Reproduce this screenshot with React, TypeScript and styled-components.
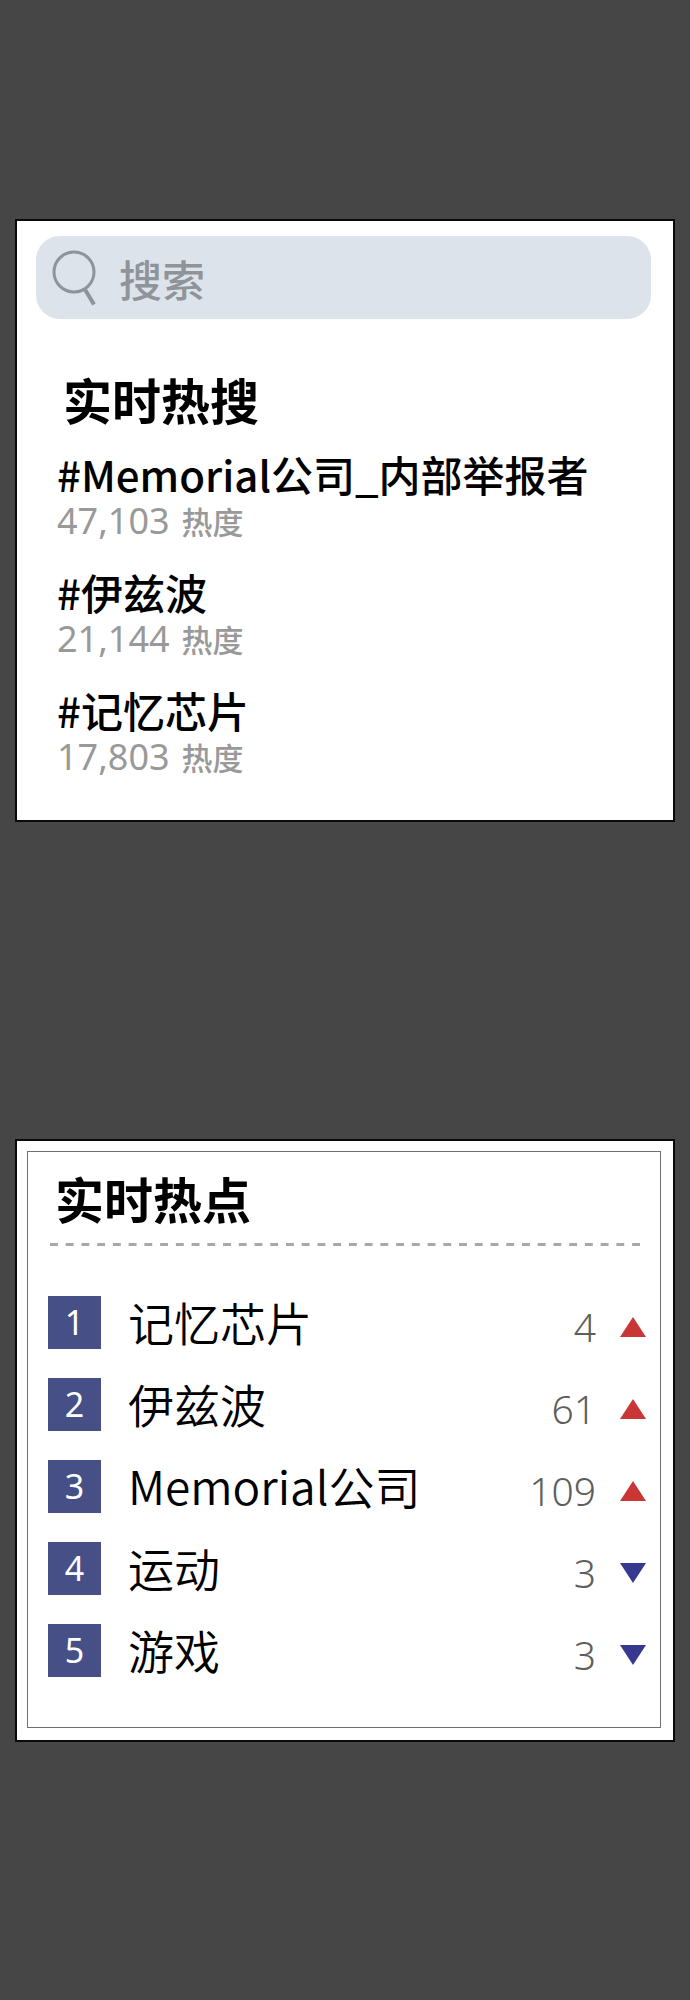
import React from "react";
import styled, { createGlobalStyle } from "styled-components";

const GlobalStyle = createGlobalStyle`
  * { box-sizing: border-box; }
  body {
    margin: 0;
    background: #464646;
    color: #000;
    font-family: "Noto Sans CJK SC", sans-serif;
  }
`;

const Page = styled.main`
  display: flex;
  flex-direction: column;
  gap: 317px;
  min-height: 100vh;
  padding: 219px 15px;
`;

const Card = styled.section`
  background: #fff;
  border: 2px solid #0a0a0a;
`;

const SearchCard = styled(Card)`
  padding: 15px 22px 40px 19px;
`;

const RankCard = styled(Card)`
  padding: 10px 12px 12px 10px;
`;

const SearchBar = styled.label`
  display: flex;
  align-items: center;
  gap: 21px;
  height: 83px;
  padding: 0 16px;
  border-radius: 24px;
  background: #dce3ea;
`;

const SearchIcon = styled.svg`
  flex: none;
  width: 46px;
  height: 58px;
  fill: none;
  stroke: #8e949b;
  stroke-width: 3;
`;

const SearchInput = styled.input`
  flex: 1;
  min-width: 0;
  padding: 0;
  border: 0;
  outline: 0;
  background: none;
  color: #8e9499;
  font: 500 43px/60px "Noto Sans CJK SC", sans-serif;

  &::placeholder {
    color: #8e9499;
    opacity: 1;
  }
`;

const Title = styled.h2`
  margin: 0;
  font-size: 49px;
  font-weight: 700;
  line-height: 56px;
`;

const SearchTitle = styled(Title)`
  margin: 52px 0 22px 27px;
`;

const TopicList = styled.ol`
  display: flex;
  flex-direction: column;
  gap: 23px;
  margin: 0;
  padding: 0 0 0 21px;
  list-style: none;
`;

const Topic = styled.a`
  display: block;
  color: #000;
  font-size: 42px;
  font-weight: 500;
  line-height: 49px;
  text-decoration: none;
`;

const Heat = styled.p`
  margin: 0;
  color: #999;
  font: 400 36px/46px "Noto Sans", "Noto Sans CJK SC", sans-serif;
`;

const HeatUnit = styled.span`
  margin-left: 12px;
  font: 500 31px/46px "Noto Sans CJK SC", sans-serif;
`;

const RankPanel = styled.div`
  padding: 18px 14px 50px 20px;
  border: 1px solid #707070;
`;

const RankTitle = styled(Title)`
  margin-left: 7px;
`;

const Divider = styled.svg`
  display: block;
  width: calc(100% - 8px);
  height: 3px;
  margin: 17px 0 50px 2px;
  stroke: #a8a8a8;
  stroke-width: 3;
`;

const RankList = styled.ol`
  display: flex;
  flex-direction: column;
  gap: 29px;
  margin: 0;
  padding: 0;
  list-style: none;
`;

const RankRow = styled.li`
  display: flex;
  align-items: center;
  height: 53px;
`;

const Badge = styled.span`
  flex: none;
  width: 53px;
  background: #474f87;
  color: #fff;
  font: 400 34px/53px "Noto Sans", sans-serif;
  text-align: center;
`;

const Name = styled.a`
  flex: 1;
  margin-left: 27px;
  padding-bottom: 2px;
  color: #000;
  font-size: 46px;
  font-weight: 350;
  line-height: 53px;
  text-decoration: none;
`;

const Change = styled.span`
  display: flex;
  align-items: center;
  gap: 24px;
  padding-top: 8px;
  color: #5e5e5e;
  font: 300 39px/53px "Noto Sans", sans-serif;
`;

const Arrow = styled.svg<{ $down: boolean }>`
  width: 26px;
  height: 20px;
  fill: ${(p) => (p.$down ? "#36398f" : "#c93636")};
`;

const topics = [
  { tag: "#Memorial公司_内部举报者", heat: "47,103" },
  { tag: "#伊兹波", heat: "21,144" },
  { tag: "#记忆芯片", heat: "17,803" },
];

const ranks = [
  { name: "记忆芯片", change: 4, down: false },
  { name: "伊兹波", change: 61, down: false },
  { name: "Memorial公司", change: 109, down: false },
  { name: "运动", change: 3, down: true },
  { name: "游戏", change: 3, down: true },
];

export default function App() {
  return (
    <Page>
      <GlobalStyle />
      <SearchCard>
        <SearchBar>
          <SearchIcon viewBox="0 0 46 58" aria-hidden="true">
            <circle cx="22" cy="23" r="20" />
            <path d="M33 40.5 L42 55.5" strokeWidth="4" />
          </SearchIcon>
          <SearchInput type="text" placeholder="搜索" aria-label="搜索" />
        </SearchBar>
        <SearchTitle>实时热搜</SearchTitle>
        <TopicList>
          {topics.map((t) => (
            <li key={t.tag}>
              <Topic href="#">{t.tag}</Topic>
              <Heat>
                {t.heat}
                <HeatUnit>热度</HeatUnit>
              </Heat>
            </li>
          ))}
        </TopicList>
      </SearchCard>
      <RankCard>
        <RankPanel>
          <RankTitle>实时热点</RankTitle>
          <Divider aria-hidden="true">
            <line x1="0" y1="1.5" x2="100%" y2="1.5" pathLength="600" strokeDasharray="8 8" />
          </Divider>
          <RankList>
            {ranks.map((r, i) => (
              <RankRow key={r.name}>
                <Badge>{i + 1}</Badge>
                <Name href="#">{r.name}</Name>
                <Change>
                  {r.change}
                  <Arrow $down={r.down} viewBox="0 0 26 20" aria-hidden="true">
                    <path d={r.down ? "M0 0H26L13 20Z" : "M0 20H26L13 0Z"} />
                  </Arrow>
                </Change>
              </RankRow>
            ))}
          </RankList>
        </RankPanel>
      </RankCard>
    </Page>
  );
}
